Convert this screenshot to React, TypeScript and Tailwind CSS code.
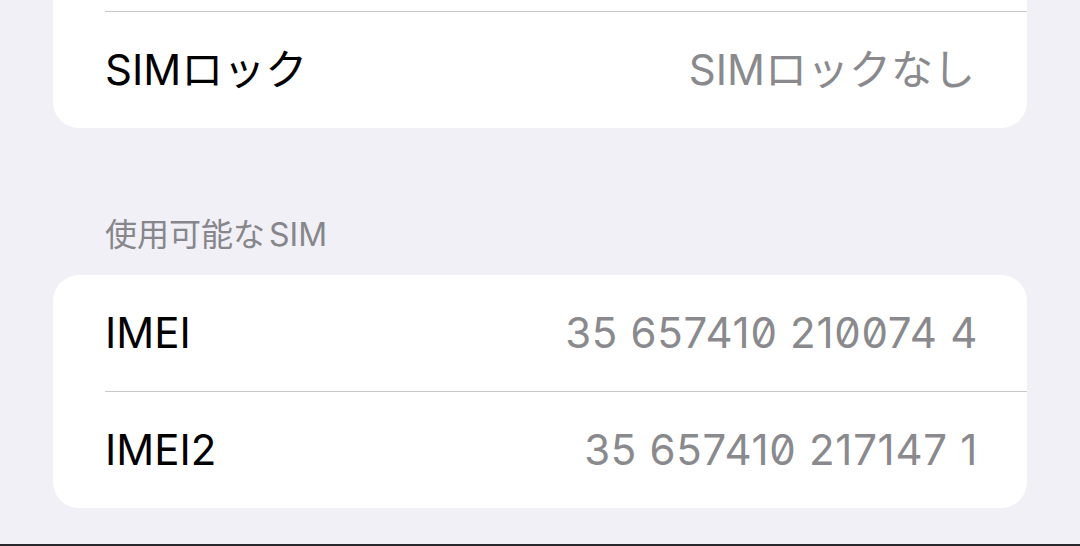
import React from 'react';

type Row = { label: string; value: string; digits?: boolean };

const font = { fontFamily: 'Inter, "Noto Sans CJK JP", sans-serif' };

const SettingRow: React.FC<{ row: Row }> = ({ row }) => (
  <div className="flex h-[116px] items-center justify-between px-[52px]">
    <span className="text-[42px] leading-none text-black">{row.label}</span>
    <span
      className={
        row.digits
          ? 'mr-[-3px] text-[42px] leading-none tracking-[0.7px] text-[#8a8a8e] [font-feature-settings:"zero"]'
          : 'text-[42px] leading-none text-[#8a8a8e]'
      }
    >
      {row.value}
    </span>
  </div>
);

const Divider = () => <div className="ml-[52px] h-px bg-[#c8c7cc]" />;

const imeiRows: Row[] = [
  { label: 'IMEI', value: '35 657410 210074 4', digits: true },
  { label: 'IMEI2', value: '35 657410 217147 1', digits: true },
];

export default function App() {
  return (
    <div className="flex h-[546px] w-full flex-col overflow-hidden bg-[#f1f0f6]" style={font}>
      <div className="flex-1 px-[53px]">
        {/* tail of the group above: bottom edge of the previous row, then SIM lock */}
        <div className="rounded-b-[26px] bg-white">
          <div className="h-[11px]" />
          <Divider />
          <SettingRow row={{ label: 'SIMロック', value: 'SIMロックなし' }} />
        </div>

        <div className="flex px-[52px] pt-[91px] pb-[24px] text-[32px] leading-none text-[#86868b]">
          <span>使用可能な</span>
          <span className="ml-[4px]">SIM</span>
        </div>

        <div className="overflow-hidden rounded-[26px] bg-white">
          {imeiRows.map((row, i) => (
            <React.Fragment key={row.label}>
              {i > 0 && <Divider />}
              <SettingRow row={row} />
            </React.Fragment>
          ))}
        </div>
      </div>
      <div className="h-[2px] bg-[#28282c]" />
    </div>
  );
}
